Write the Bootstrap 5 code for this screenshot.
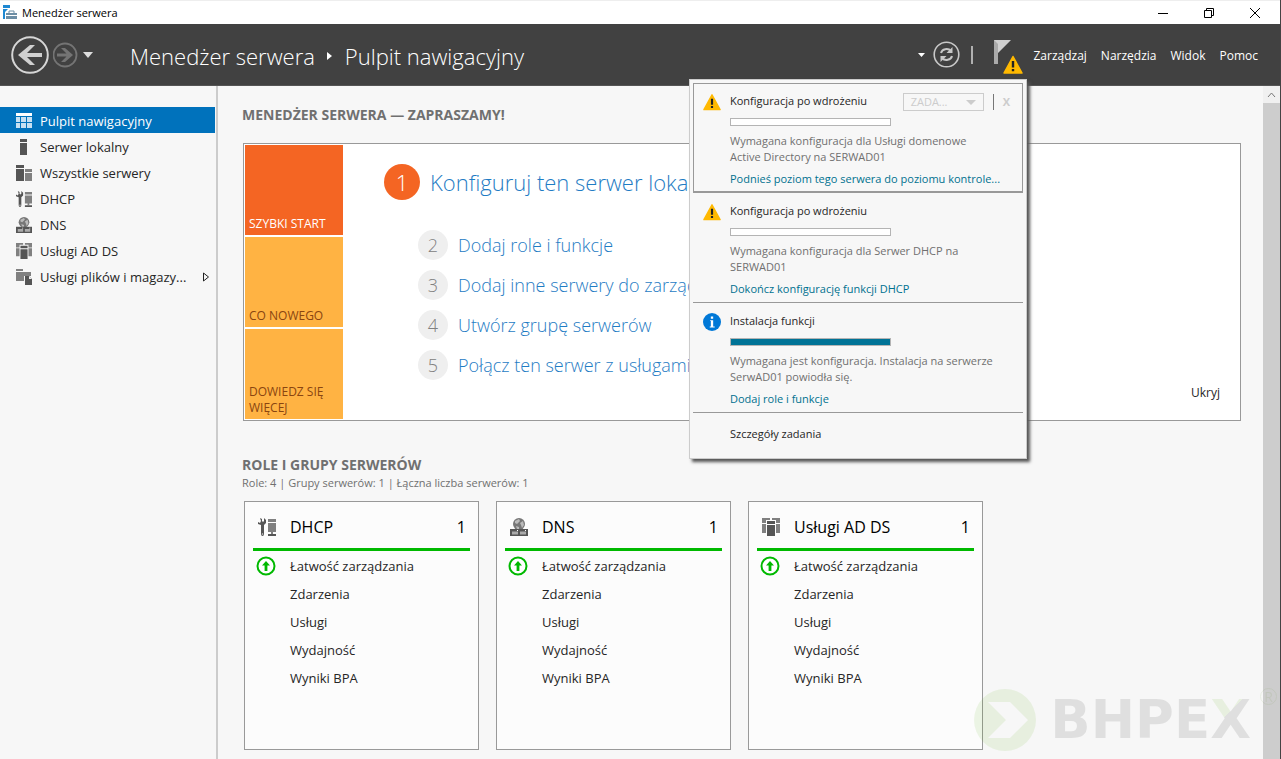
<!DOCTYPE html>
<html lang="pl">
<head>
<meta charset="utf-8">
<meta name="viewport" content="width=device-width, initial-scale=1">
<title>Menedżer serwera</title>
<link href="https://cdn.jsdelivr.net/npm/bootstrap@5.3.0/dist/css/bootstrap.min.css" rel="stylesheet">
<style>
body{font-family:"Open Sans","Noto Sans",sans-serif;font-size:13px;line-height:16px;color:#262626;background:#f7f7f7}
button{background:none;border:0;padding:0;color:inherit;line-height:inherit}
a{text-decoration:none;color:inherit}
svg{display:block;flex:none}
.app{min-height:100vh;border-right:1px solid #444}
.titlebar{height:24px;background:#fff;border-top:1px solid #eee;font-size:11px;color:#000;padding:0 19px 0 3px}
.restore{margin:0 34px}
.topbar{height:62px;background:#414141;color:#fff;padding-left:10px;padding-right:22px;border-bottom:1px solid #555}
.crumbs{font-size:22px;line-height:32px;font-weight:300;margin-left:37px;padding-top:3px;gap:12px}
.topmenu{font-size:12px;gap:14px;margin-left:8px;padding-top:2px}
.bar-sep{width:2px;height:18px;background:#b0b0b0;margin:0 20px 0 11px}
.side{width:218px;flex:none;border-right:2px solid #ccc;padding-top:21px;margin-right:-1px}
.side a{height:26px;padding:2px 5px 0 16px;gap:8px;margin-right:1px}
.side a.current{background:#0072bc;color:#fff}
.work{padding:18px 22px 9px 25px}
.sect{font-size:14px;line-height:22px;font-weight:700;color:#707070;margin:0}
.welcome{background:#fff;border:1px solid #999;padding:1px;margin:17px 0 33px 1px}
.tiles{width:98px;gap:2px;flex:none;font-size:12px}
.tile{height:90px;padding:4px 4px 3px;background:#ffb343;color:#8a4510;text-align:left}
.tile.hot{background:#f46523;color:#fff}
.steps{padding:19px 0 0 41px;color:#1f7cc4;font-weight:300}
.step{gap:10px;height:40px;font-size:18px;padding-left:34px;white-space:nowrap}
.step.first{height:36px;font-size:22px;padding-left:0;margin-bottom:25px}
.num{width:30px;height:30px;border-radius:50%;background:#efefef;color:#808080;flex:none}
.first .num{width:36px;height:36px;background:#f46523;color:#fff}
.hide-btn{font-size:12px;margin:0 19px 18px 0}
.sub{font-size:11px;line-height:14px;color:#707070;margin:0 0 11px}
.groups{gap:17px;padding-left:2px}
.group{width:235px;min-height:249px;background:#fcfcfc;border:1px solid #999;padding:0 8px}
.group h3{font-size:16px;line-height:20px;font-weight:400;color:#000;height:49px;margin:0;border-bottom:3px solid #00b900;gap:14px;padding:4px 4px 0 5px}
.group a{height:28px;padding-left:37px}
.group a.ok{padding-left:3px;gap:14px}
.group nav{padding-top:1px}
.scroller{width:17px;flex:none;background:#cdcdcd}
.scroller span{height:17px;background:#f0f0f0}
.notes{position:absolute;z-index:5;top:55px;right:253px;width:338px;background:#f7f7f7;color:#262626;border:1px solid #ccc;padding:3px;font-size:11px;box-shadow:3px 3px 3px #555}
.note{height:110px;padding:10px 2px 0 10px;border-bottom:1px solid #999;gap:9px}
.note.selected{border:1px solid #999;border-bottom-width:2px;padding:9px 1px 0 9px}
.note-body{min-width:0;flex:1 1 auto}
.note h4{font-size:11px;line-height:16px;font-weight:400;margin:0}
.note progress{display:block;appearance:none;width:161px;height:8px;border:1px solid #b4b4b4;margin:9px 0 7px;background:#fff}
.note progress::-webkit-progress-bar{background:#fff}
.note progress::-webkit-progress-value{background:#007396}
.note p{margin:0 0 6px;padding-right:24px;color:#707070}
.note a{color:#00718f;display:block;white-space:nowrap}
.note-head{height:16px}
.task-tools{height:18px;color:#ccc;margin-right:7px}
.task-btn{width:81px;height:18px;border:1px solid #ccc;padding:0 7px;color:#ccc}
.task-sep{width:1px;height:16px;background:#777;margin:0 9px}
.more{padding:13px 0 13px 37px}
.brand-mark{position:absolute;z-index:3;right:3px;bottom:8px;gap:14px;opacity:.09;pointer-events:none;color:#000}
.brand-mark b{font:bold 53px/62px "DejaVu Sans",sans-serif}
.brand-x{color:transparent;background:linear-gradient(135deg,#4fa800 42%,#000 42%);-webkit-background-clip:text;background-clip:text}
.brand-mark sup{font-size:14px;top:-24px;width:17px;height:17px;line-height:15px;border:1px solid #5a8a20;border-radius:50%;color:#5a8a20;text-align:center;margin-left:-5px}
</style>
</head>
<body>
<svg width="0" height="0" class="position-absolute" aria-hidden="true">
<symbol id="i-dash" viewBox="0 0 16 16"><path fill="#fff" d="M0 0h16v3H0z"/><path fill="#c6e0f2" d="M0 4h4v5H0zM5 4h5v5H5zM11 4h5v5h-5zM0 10h4v5H0zM5 10h5v5H5zM11 10h5v5h-5z"/></symbol>
<symbol id="i-server" viewBox="0 0 16 16"><path fill="#555" d="M4 0h7v3H4zM4 4h7v12H4z"/></symbol>
<symbol id="i-all" viewBox="0 0 16 16"><path fill="#555" d="M0 0h8v3H0zM0 4h8v12H0z"/><path fill="#808080" d="M9 4h7v3H9zM9 8h7v8H9z"/></symbol>
<symbol id="i-dhcp" viewBox="0 0 18 18"><path fill="#808080" d="M10 1h8v3h-8zM10 5h8v9h-8zM13 14h2v2h-2z"/><path fill="#555" d="M10 16h8v2h-8zM2 0l2 1v2l1 1 1-1V0l2 2v3L6 7v9q0 2-1.500 2T3 16V7L0 6V4l2 1 1-2z"/><circle cx="4.500" cy="16" r="0.700" fill="#ddd"/></symbol>
<symbol id="i-dns" viewBox="0 0 18 18"><circle cx="9" cy="6" r="6" fill="#777"/><path fill="#bbb" d="M5 3l4-2 1 2-3 3-2-1zM10 5l3-2 1 4-2 3-1-3zM6 8l3 1v2H7z"/><path fill="#555" d="M0 11h18v7H0z"/><path fill="#aaa" d="M2 13.500h6v3H2zM10 13.500h6v3h-6z"/><path fill="#fff" d="M7 12h1v1H7zM15 12h1v1h-1z"/></symbol>
<symbol id="i-adds" viewBox="0 0 18 18"><path fill="#808080" d="M0 0h8v2H4v3H0zM10 0h8v5h-4V2h-4zM0 6h4v9H0zM14 6h4v9h-4z"/><path fill="#555" d="M5 3h8v3H5zM5 7h8v11H5z"/></symbol>
<symbol id="i-files" viewBox="0 0 16 16"><path fill="#808080" d="M0 0h7v2H0zM0 3h15v4H8v5H0z"/><path fill="#555" d="M9 7h4l3 3v6H9z"/><path fill="#eee" d="M13 7v3h3z"/></symbol>
<symbol id="i-warn" viewBox="0 0 20 19"><path fill="#ffb900" stroke="#ffb900" stroke-width="1.500" stroke-linejoin="round" d="M10 1.500L19 18H1z"/><path fill="#222" d="M8.800 6h2.400v6.500H8.800zM8.800 14h2.400v2.200H8.800z"/></symbol>
<symbol id="i-info" viewBox="0 0 20 20"><circle cx="10" cy="10" r="10" fill="#0078d7"/><path fill="#fff" d="M8.700 4h2.600v2.400H8.700zM8 8h3.300v7H13v1H7.500v-1h1.200V9H8z"/></symbol>
<symbol id="i-ok" viewBox="0 0 20 20"><circle cx="10" cy="10" r="8.500" fill="#fff" stroke="#00b900" stroke-width="2"/><path fill="#00b900" d="M10 5l4 4.500h-2.600V15H8.600V9.500H6z"/></symbol>
</svg>
<div class="app d-flex flex-column position-relative">
  <header class="titlebar d-flex align-items-center">
    <svg width="15" height="15" viewBox="0 0 15 15"><path fill="#1e88d2" d="M0 0h7v3H0zM0 4h5L2 7v7H0z"/><path fill="#6d8ea5" d="M3 8h11v2H3zM3 11h11v3H3z"/><path fill="none" stroke="#6d8ea5" d="M6 8V6h5v2"/></svg>
    <span class="ms-1">Menedżer serwera</span>
    <div class="ms-auto d-flex align-items-center">
      <button aria-label="Minimalizuj"><svg width="12" height="12"><path stroke="#000" d="M1 6.500h10"/></svg></button>
      <button aria-label="Przywróć" class="restore"><svg width="12" height="12"><path fill="none" stroke="#000" d="M1.500 3.500h7v7h-7zM3.500 3.500v-2h7v7h-2"/></svg></button>
      <button aria-label="Zamknij"><svg width="12" height="12"><path stroke="#000" d="M1 1l10 10M11 1L1 11"/></svg></button>
    </div>
  </header>
  <div class="topbar d-flex align-items-center position-relative">
    <button aria-label="Wstecz"><svg width="39" height="39" viewBox="0 0 39 39"><circle cx="20" cy="20" r="17.800" fill="none" stroke="#d6d6d6" stroke-width="2"/><path fill="#d0d0d0" d="M8 20l12-10h5l-8 8h15v4H17l8 8h-5z"/></svg></button>
    <button aria-label="Dalej" class="ms-1"><svg width="26" height="26" viewBox="0 0 26 26"><circle cx="12" cy="13" r="11.500" fill="none" stroke="#747474" stroke-width="1.800"/><path fill="#747474" d="M20 13l-8-7H8l5.500 5.500H4v3h9.500L8 20h4z"/></svg></button>
    <button aria-label="Historia" class="ms-1"><svg width="10" height="6"><path fill="#ddd" d="M0 0h10L5 6z"/></svg></button>
    <div class="crumbs d-flex align-items-center"><span>Menedżer serwera</span><svg width="6" height="8"><path fill="#fff" d="M0 0l5 4-5 4z"/></svg><span>Pulpit nawigacyjny</span></div>
    <div class="ms-auto d-flex align-items-center">
      <button aria-label="Lista odświeżania"><svg width="7" height="4"><path fill="#fff" d="M0 0h7L3.500 4z"/></svg></button>
      <button aria-label="Odśwież" class="ms-2"><svg width="27" height="27" viewBox="0 0 27 27"><circle cx="13.500" cy="13.500" r="12.300" fill="none" stroke="#c8c8c8" stroke-width="1.600"/><path fill="none" stroke="#c8c8c8" stroke-width="2" d="M8 12c1-4 7-5.500 10-2M19 15c-1 4-7 5.500-10 2"/><path fill="#c8c8c8" d="M19.500 6v6h-6zM7.500 21v-6h6z"/></svg></button>
      <span class="bar-sep"></span>
      <button aria-label="Powiadomienia"><svg width="32" height="38" viewBox="0 0 32 38"><path fill="#aaa" d="M1 4h4v24H1z"/><path fill="#d0d0d0" d="M1 4h17L5 17V8z"/><use href="#i-warn" x="10" y="19" width="20" height="19"/></svg></button>
      <nav class="topmenu d-flex"><a href="#">Zarządzaj</a><a href="#">Narzędzia</a><a href="#">Widok</a><a href="#">Pomoc</a></nav>
    </div>
    <section class="notes" aria-label="Powiadomienia">
      <div class="note selected d-flex"><svg width="18" height="18"><use href="#i-warn"/></svg>
        <div class="note-body"><div class="note-head d-flex justify-content-between"><h4>Konfiguracja po wdrożeniu</h4>
          <div class="task-tools d-flex align-items-center"><button class="task-btn d-flex align-items-center justify-content-between" disabled>ZADA...<svg width="10" height="5"><path fill="#ccc" d="M0 0h10L5 5z"/></svg></button><span class="task-sep"></span><button aria-label="Usuń" class="fw-bold pe-1" disabled>X</button></div></div>
          <progress max="100" value="0" aria-label="Postęp"></progress>
          <p>Wymagana konfiguracja dla Usługi domenowe Active Directory na SERWAD01</p><a href="#">Podnieś poziom tego serwera do poziomu kontrole...</a></div></div>
      <div class="note d-flex"><svg width="18" height="18"><use href="#i-warn"/></svg>
        <div class="note-body"><h4>Konfiguracja po wdrożeniu</h4><progress max="100" value="0" aria-label="Postęp"></progress>
          <p>Wymagana konfiguracja dla Serwer DHCP na SERWAD01</p><a href="#">Dokończ konfigurację funkcji DHCP</a></div></div>
      <div class="note d-flex"><svg width="18" height="18"><use href="#i-info"/></svg>
        <div class="note-body"><h4>Instalacja funkcji</h4><progress max="100" value="100" aria-label="Postęp"></progress>
          <p>Wymagana jest konfiguracja. Instalacja na serwerze SerwAD01 powiodła się.</p><a href="#">Dodaj role i funkcje</a></div></div>
      <div class="more"><a href="#">Szczegóły zadania</a></div>
    </section>
  </div>
  <div class="d-flex flex-grow-1">
    <nav class="side">
      <a href="#" class="current d-flex align-items-center"><svg width="16" height="16"><use href="#i-dash"/></svg>Pulpit nawigacyjny</a>
      <a href="#" class="d-flex align-items-center"><svg width="16" height="16"><use href="#i-server"/></svg>Serwer lokalny</a>
      <a href="#" class="d-flex align-items-center"><svg width="16" height="16"><use href="#i-all"/></svg>Wszystkie serwery</a>
      <a href="#" class="d-flex align-items-center"><svg width="16" height="16"><use href="#i-dhcp"/></svg>DHCP</a>
      <a href="#" class="d-flex align-items-center"><svg width="16" height="16"><use href="#i-dns"/></svg>DNS</a>
      <a href="#" class="d-flex align-items-center"><svg width="16" height="16"><use href="#i-adds"/></svg>Usługi AD DS</a>
      <a href="#" class="d-flex align-items-center"><svg width="16" height="16"><use href="#i-files"/></svg>Usługi plików i magazy...<svg class="ms-auto" width="8" height="10"><path fill="none" stroke="#222" d="M1.500 1l5 4-5 4z"/></svg></a>
    </nav>
    <main class="work flex-grow-1">
      <h1 class="sect">MENEDŻER SERWERA — ZAPRASZAMY!</h1>
      <section class="welcome d-flex">
        <div class="tiles d-flex flex-column">
          <button class="tile hot d-flex align-items-end">SZYBKI START</button>
          <button class="tile d-flex align-items-end">CO NOWEGO</button>
          <button class="tile d-flex align-items-end">DOWIEDZ SIĘ WIĘCEJ</button>
        </div>
        <div class="steps">
          <a href="#" class="step first d-flex align-items-center"><span class="num d-flex align-items-center justify-content-center">1</span>Konfiguruj ten serwer lokalny</a>
          <a href="#" class="step d-flex align-items-center"><span class="num d-flex align-items-center justify-content-center">2</span>Dodaj role i funkcje</a>
          <a href="#" class="step d-flex align-items-center"><span class="num d-flex align-items-center justify-content-center">3</span>Dodaj inne serwery do zarządzania</a>
          <a href="#" class="step d-flex align-items-center"><span class="num d-flex align-items-center justify-content-center">4</span>Utwórz grupę serwerów</a>
          <a href="#" class="step d-flex align-items-center"><span class="num d-flex align-items-center justify-content-center">5</span>Połącz ten serwer z usługami</a>
        </div>
        <button class="hide-btn ms-auto align-self-end">Ukryj</button>
      </section>
      <h2 class="sect">ROLE I GRUPY SERWERÓW</h2>
      <p class="sub">Role: 4 | Grupy serwerów: 1 | Łączna liczba serwerów: 1</p>
      <div class="groups d-flex flex-wrap">
        <section class="group"><h3 class="d-flex align-items-center"><svg width="18" height="18"><use href="#i-dhcp"/></svg>DHCP<span class="ms-auto">1</span></h3>
          <nav><a href="#" class="ok d-flex align-items-center"><svg width="20" height="20"><use href="#i-ok"/></svg>Łatwość zarządzania</a><a href="#" class="d-flex align-items-center">Zdarzenia</a><a href="#" class="d-flex align-items-center">Usługi</a><a href="#" class="d-flex align-items-center">Wydajność</a><a href="#" class="d-flex align-items-center">Wyniki BPA</a></nav></section>
        <section class="group"><h3 class="d-flex align-items-center"><svg width="18" height="18"><use href="#i-dns"/></svg>DNS<span class="ms-auto">1</span></h3>
          <nav><a href="#" class="ok d-flex align-items-center"><svg width="20" height="20"><use href="#i-ok"/></svg>Łatwość zarządzania</a><a href="#" class="d-flex align-items-center">Zdarzenia</a><a href="#" class="d-flex align-items-center">Usługi</a><a href="#" class="d-flex align-items-center">Wydajność</a><a href="#" class="d-flex align-items-center">Wyniki BPA</a></nav></section>
        <section class="group"><h3 class="d-flex align-items-center"><svg width="18" height="18"><use href="#i-adds"/></svg>Usługi AD DS<span class="ms-auto">1</span></h3>
          <nav><a href="#" class="ok d-flex align-items-center"><svg width="20" height="20"><use href="#i-ok"/></svg>Łatwość zarządzania</a><a href="#" class="d-flex align-items-center">Zdarzenia</a><a href="#" class="d-flex align-items-center">Usługi</a><a href="#" class="d-flex align-items-center">Wydajność</a><a href="#" class="d-flex align-items-center">Wyniki BPA</a></nav></section>
      </div>
    </main>
    <div class="scroller"><span class="d-flex align-items-center justify-content-center"><svg width="9" height="6"><path fill="none" stroke="#777" d="M1 5l3.500-4L8 5"/></svg></span></div>
  </div>
  <div class="brand-mark d-flex align-items-center"><svg width="62" height="62" viewBox="0 0 62 62"><path fill="#4fa800" fill-rule="evenodd" d="M31 0a31 31 0 1 0 0 62 31 31 0 0 0 0-62zM14 13h22l18 18-18 18H14l18-18z"/></svg><b>BHPE<span class="brand-x">X</span></b><sup>R</sup></div>
</div>
<script src="https://cdn.jsdelivr.net/npm/bootstrap@5.3.0/dist/js/bootstrap.bundle.min.js"></script>
</body>
</html>
